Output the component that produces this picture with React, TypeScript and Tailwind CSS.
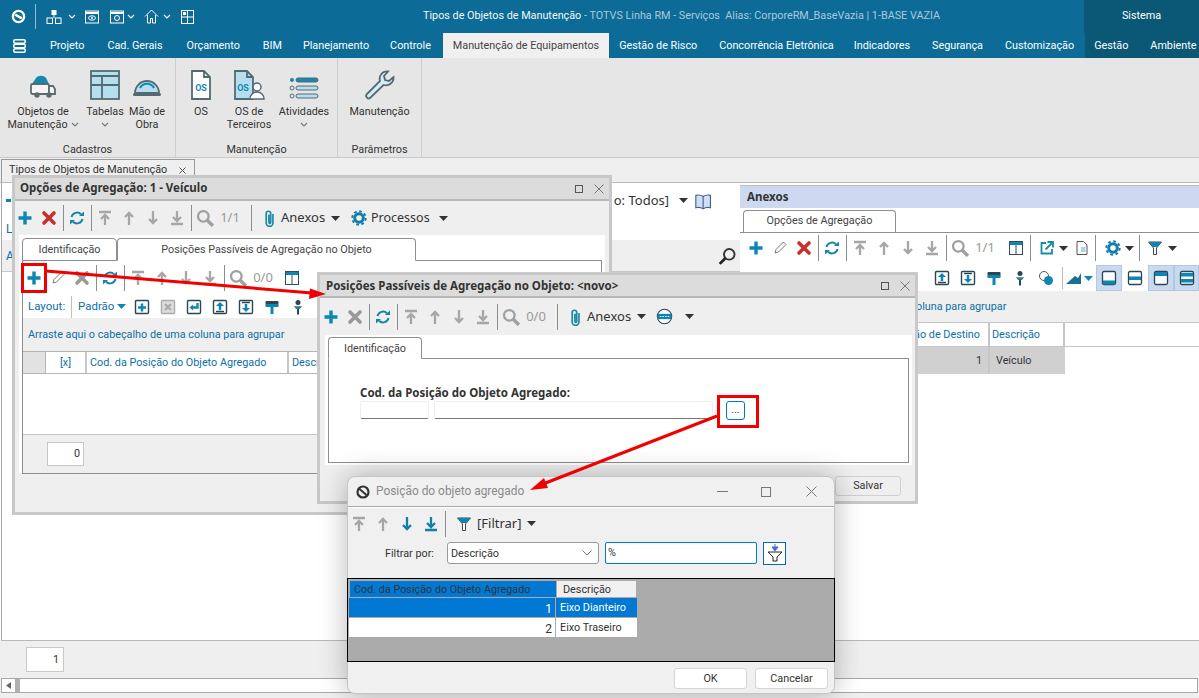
import React from 'react';

const Ic = ({ s = 16, v = 16, children }: { s?: number; v?: number; children: React.ReactNode }) => (
  <svg width={s} height={s} viewBox={`0 0 ${v} ${v}`} fill="none" className="shrink-0">{children}</svg>
);
const TEAL = '#0e86b4';
const GRAY = '#a6a6a6';
const Plus = ({ c = TEAL }: { c?: string }) => <Ic><path d="M6.300 1.500h3.400v4.800h4.800v3.400H9.700v4.800H6.300V9.700H1.500V6.300h4.800z" fill={c} /></Ic>;
const XMark = ({ c = '#c9302c' }: { c?: string }) => <Ic><path d="M3 3l10 10M13 3L3 13" stroke={c} strokeWidth="3.600" strokeLinecap="round" /></Ic>;
const Pencil = () => <Ic><path d="M3 13l1-3.500L11.500 2 14 4.500 6.500 12z" stroke="#777" fill="#fff" /></Ic>;
const Refresh = ({ c = '#1585a5' }: { c?: string }) => (
  <Ic><path d="M2.500 7A5.700 5.700 0 0 1 12 4.200" stroke={c} strokeWidth="2" /><path d="M13.500 9A5.700 5.700 0 0 1 4 11.800" stroke={c} strokeWidth="2" /><path d="M10 6h5V1.500z" fill={c} /><path d="M6 10H1v4.500z" fill={c} /></Ic>
);
const NavTop = ({ c = GRAY }: { c?: string }) => <Ic><path d="M2 2h12M8 5v10M4 9l4-4 4 4" stroke={c} strokeWidth="2.300" /></Ic>;
const NavUp = ({ c = GRAY }: { c?: string }) => <Ic><path d="M8 3v12M4 7l4-4 4 4" stroke={c} strokeWidth="2.300" /></Ic>;
const NavDown = ({ c = GRAY }: { c?: string }) => <Ic><path d="M8 13V1M4 9l4 4 4-4" stroke={c} strokeWidth="2.300" /></Ic>;
const NavBottom = ({ c = GRAY }: { c?: string }) => <Ic><path d="M2 14h12M8 1v10M4 7l4 4 4-4" stroke={c} strokeWidth="2.300" /></Ic>;
const Zoom = () => <Ic s={18}><circle cx="6.500" cy="6.500" r="4.700" stroke="#a0a0a0" strokeWidth="2" /><path d="M10 10l5 5" stroke="#a0a0a0" strokeWidth="3" /></Ic>;
const Clip = () => <Ic s={18}><path d="M11.500 4.500v8a3 3 0 0 1-6 0V4a2 2 0 0 1 4 0v8a.8.8 0 0 1-1.600 0V5" stroke="#1b8aa8" strokeWidth="1.500" /></Ic>;
const Gear = () => (
  <Ic><circle cx="8" cy="8" r="4.300" stroke="#0e7fab" strokeWidth="3" /><circle cx="8" cy="8" r="6.700" stroke="#0e7fab" strokeWidth="2" strokeDasharray="2.700 2.560" /></Ic>
);
const Caret = ({ c = '#333' }: { c?: string }) => <svg width="9" height="5" viewBox="0 0 9 5" className="shrink-0"><path d="M0 0h9L4.500 5z" fill={c} /></svg>;
const Chev = ({ c = '#777' }: { c?: string }) => <svg width="8" height="5" viewBox="0 0 8 5" fill="none" className="shrink-0"><path d="M1 1l3 3 3-3" stroke={c} strokeWidth="1.100" /></svg>;
const GridIc = () => <Ic><rect x="1.500" y="1.500" width="13" height="13" stroke="#33505c" /><rect x="2" y="2" width="12" height="3" fill={TEAL} /><path d="M8 5v9" stroke="#33505c" /></Ic>;
const Funnel = () => <Ic><path d="M1.500 2h13L9.500 8v6.500h-3V8z" fill="#fff" stroke="#444" /><path d="M1.500 2h13L10 7H6z" fill={TEAL} /></Ic>;
const ExportIc = () => <Ic><path d="M7 3H2.500v10.500H13V9" stroke="#1b8aa8" strokeWidth="1.800" /><path d="M6.500 9.500L13 3M8.500 2H14v5.500" stroke="#1b8aa8" strokeWidth="1.800" /></Ic>;
const DocIc = () => <Ic><path d="M3 1.500h6.500L13 5v9.500H3z" fill="#fff" stroke="#555" /><rect x="7" y="7" width="4.500" height="5" fill="#a9d6e5" /></Ic>;
const Book = () => <Ic s={18}><path d="M9 4C7 2.500 4.500 2.500 2.500 3v11c2-.5 4.500-.5 6.500 1 2-1.500 4.500-1.500 6.500-1V3C13.500 2.500 11 2.500 9 4z" fill="#cfe0f5" stroke="#46608e" /><path d="M9 4v11" stroke="#46608e" /></Ic>;
const NoEntry = () => <Ic s={17}><circle cx="8" cy="8" r="6.800" fill="#fff" stroke="#345" /><rect x="1.500" y="5.500" width="13" height="5" fill={TEAL} /><path d="M3.500 8h9" stroke="#fff" strokeDasharray="1.500 1" /></Ic>;
const Magn = () => <Ic s={18}><circle cx="10" cy="6.500" r="4.700" stroke="#333" strokeWidth="1.700" /><path d="M6.500 10l-5 5" stroke="#222" strokeWidth="2.500" /></Ic>;

/* second-row boxed icons */
const Box = ({ children, gray }: { children: React.ReactNode; gray?: boolean }) => (
  <Ic><rect x="1.500" y="1.500" width="13" height="13" rx="1" fill={gray ? '#ddd' : '#fff'} stroke={gray ? '#aaa' : '#2c4653'} strokeWidth="1.400" />{children}</Ic>
);
const BoxPlus = () => <Box><path d="M8 4.500v8M4 8.500h8" stroke={TEAL} strokeWidth="2.500" /></Box>;
const BoxX = () => <Box gray><path d="M5 5l6 6M11 5l-6 6" stroke="#aaa" strokeWidth="2.300" /></Box>;
const BoxEnter = () => <Box><path d="M11.500 4v4.500H5.500" stroke={TEAL} strokeWidth="2.300" /><path d="M7 5.500L3.500 8.500 7 11.500z" fill={TEAL} /></Box>;
const BoxUp = () => <Box><path d="M4 12.500h8" stroke="#2c4653" strokeWidth="1.500" /><path d="M8 11V6" stroke={TEAL} strokeWidth="2.500" /><path d="M4 7l4-4 4 4z" fill={TEAL} /></Box>;
const BoxDown = () => <Box><path d="M4 3.500h8" stroke="#2c4653" strokeWidth="1.500" /><path d="M8 5v5" stroke={TEAL} strokeWidth="2.500" /><path d="M4 9l4 4 4-4z" fill={TEAL} /></Box>;
const Roller = () => <Ic><rect x="1.500" y="2" width="13" height="6" rx="1" fill="#2c4653" /><rect x="2" y="5" width="12" height="3" fill={TEAL} /><rect x="6.500" y="8" width="3" height="7" fill={TEAL} /></Ic>;
const PinIc = () => <Ic><circle cx="8" cy="3.500" r="2.500" fill="#2c4653" /><path d="M4 7h8l-2 3H6z" fill={TEAL} /><path d="M8 10v5.500" stroke="#2c4653" strokeWidth="2" /><path d="M4.500 7.500h7" stroke="#888" /></Ic>;
const CircleCombo = () => <Ic><circle cx="6" cy="6" r="4.500" fill="#fff" stroke="#555" /><circle cx="10.500" cy="10.500" r="4.500" fill={TEAL} /></Ic>;
const AreaIc = () => <svg width="15" height="11" viewBox="0 0 15 11" className="shrink-0"><path d="M0 11L9 3l3 2 3-5v11z" fill="#1b6f93" /></svg>;
const Layout1 = ({ kind }: { kind: 'bottom' | 'middle' | 'top' | 'double' }) => (
  <Ic>
    <rect x="1.500" y="1.500" width="13" height="13" rx="1.500" fill="#fff" stroke="#2c4653" strokeWidth="1.300" />
    {kind === 'bottom' && <rect x="2" y="10.500" width="12" height="4" fill={TEAL} />}
    {kind === 'middle' && <rect x="2" y="6.500" width="12" height="3.500" fill={TEAL} />}
    {kind === 'top' && <rect x="2" y="2" width="12" height="4" fill={TEAL} />}
    {kind === 'double' && <><rect x="2" y="3" width="12" height="3.500" fill={TEAL} /><rect x="2" y="9" width="12" height="3.500" fill={TEAL} /></>}
  </Ic>
);

const S = ({ children, w = 'w-[24px]' }: { children?: React.ReactNode; w?: string }) => (
  <div className={`${w} flex justify-center items-center shrink-0`}>{children}</div>
);
const Sep = () => <div className="w-px h-[26px] bg-[#8c8c8c] ml-[2px] mr-px shrink-0" />;

const Nav = ({ label }: { label: string }) => (
  <>
    <Sep />
    <S><NavTop /></S><S><NavUp /></S><S><NavDown /></S><S><NavBottom /></S>
    <Sep />
    <S><Zoom /></S>
    <span className="w-[26px] text-[13px] text-[#9a9a9a] text-center shrink-0 font-['Noto_Sans',sans-serif]">{label}</span>
  </>
);

const WinBtns = () => (
  <div className="ml-auto flex items-center gap-[11px] pr-[5px]">
    <div className="w-[8px] h-[8px] border border-[#555]" />
    <svg width="10" height="10" viewBox="0 0 10 10" fill="none"><path d="M.5.5l9 9M9.500.5l-9 9" stroke="#777" /></svg>
  </div>
);

const Win = ({ title, cls, titleCls = '', children }: { title: string; cls: string; titleCls?: string; children: React.ReactNode }) => (
  <div className={`absolute flex flex-col border-[3px] border-[#c8c8c8] bg-[#efefef] ${cls}`}>
    <div className="h-[21px] bg-[#dcdcdc] border-b-2 border-[#b9b9b9] box-content flex items-center pl-[5px] shrink-0">
      <span className={`font-bold text-[11.5px] text-[#333] font-['Noto_Sans',sans-serif] ${titleCls}`}>{title}</span>
      <WinBtns />
    </div>
    {children}
  </div>
);

const Cell = ({ w, cls = '', children }: { w: string; cls?: string; children?: React.ReactNode }) => (
  <div className={`${w} h-full flex items-center border-r-2 border-[#c6c6c6] shrink-0 pt-[2px] ${cls}`}>{children}</div>
);

const RibbonItem = ({ w, icon, lines, chev, twoChev }: { w: string; icon: React.ReactNode; lines: string[]; chev?: boolean; twoChev?: boolean }) => (
  <div className={`${w} flex flex-col items-center shrink-0`}>
    <div className="h-[32px] flex items-end justify-center mt-[10px]">{icon}</div>
    <div className="mt-[5px] leading-[13px] text-center whitespace-nowrap">
      {lines.map((l, i) => (
        <div key={l} className="flex items-center justify-center gap-[3px]">{l}{twoChev && i === 1 && <Chev />}</div>
      ))}
      {chev && <div className="flex justify-center h-[13px] items-center"><Chev /></div>}
    </div>
  </div>
);

const RibbonGroup = ({ w, label, children }: { w: string; label: string; children: React.ReactNode }) => (
  <div className={`${w} h-full flex flex-col border-r border-[#cdcdcd] shrink-0`}>
    <div className="flex flex-1">{children}</div>
    <div className="text-center h-[16px] leading-[18px]">{label}</div>
  </div>
);

const TabHead = ({ w, h = 'h-[23px]', children, on }: { w: string; h?: string; children: React.ReactNode; on?: boolean }) => (
  <div className={`${w} ${h} border border-[#8e8e8e] rounded-t-[4px] flex items-center justify-center text-[#444] shrink-0 bg-white pt-[2px] ${on ? 'border-b-white' : ''}`}>{children}</div>
);

const MenuItem = ({ children, cls = '' }: { children: React.ReactNode; cls?: string }) => (
  <div className={`px-[11px] h-full flex items-center whitespace-nowrap pt-[1px] ${cls}`}>{children}</div>
);

export default function App() {
  return (
    <div className="relative w-[1199px] h-[698px] overflow-hidden bg-[#efefef] text-[10.8px] text-[#333] font-['Roboto',sans-serif]">
      {/* Title bar */}
      <div className="h-[33px] bg-[#0d6c97] flex items-center text-white">
        <div className="w-[35px] flex justify-center pl-[2px]">
          <svg width="15" height="15" viewBox="0 0 16 16" fill="none"><circle cx="8" cy="8" r="6" stroke="#fff" strokeWidth="2.500" /><path d="M4.500 6l7 4" stroke="#fff" strokeWidth="2.500" /></svg>
        </div>
        <div className="w-px h-[25px] bg-[#8fbdd2]" />
        <div className="flex items-center ml-[10px] w-[150px] shrink-0">
          <svg width="16" height="16" viewBox="0 0 16 16" fill="none"><rect x="5.500" y="1" width="5" height="5" fill="#fff" /><rect x="1" y="9" width="5.500" height="5.500" stroke="#fff" /><rect x="9.500" y="9" width="5.500" height="5.500" stroke="#fff" /><path d="M8 6v3" stroke="#fff" /></svg>
          <div className="ml-[6px]"><Chev c="#fff" /></div>
          <svg width="14" height="14" viewBox="0 0 14 14" fill="none" className="ml-[9px]"><rect x=".5" y="1" width="13" height="12" stroke="#fff" /><path d="M1 3h12" stroke="#fff" strokeWidth="2" /><ellipse cx="7" cy="8" rx="3.500" ry="2.200" stroke="#fff" /><circle cx="7" cy="8" r="1" fill="#fff" /></svg>
          <svg width="14" height="14" viewBox="0 0 14 14" fill="none" className="ml-[11px]"><rect x=".5" y="1" width="13" height="12" stroke="#fff" /><path d="M1 3h12" stroke="#fff" strokeWidth="2" /><circle cx="7" cy="8" r="2.500" stroke="#fff" /></svg>
          <div className="ml-[3px]"><Chev c="#fff" /></div>
          <svg width="15" height="15" viewBox="0 0 15 15" fill="none" className="ml-[9px]"><path d="M1 7.500L7.500 1 14 7.500M3.500 6v8h3V9.500h2V14h3V6" stroke="#fff" /></svg>
          <div className="ml-[4px]"><Chev c="#fff" /></div>
          <svg width="13" height="14" viewBox="0 0 13 14" fill="none" className="ml-[10px]"><rect x=".5" y=".5" width="12" height="13" stroke="#fff" /><path d="M6.500 1v12M1 7h11" stroke="#fff" /><rect x="2" y="2" width="3" height="3" fill="#fff" /></svg>
        </div>
        <div className="flex-1 pl-[227px] whitespace-pre">
          <span className="text-[#f2f6f8]">Tipos de Objetos de Manutenção</span><span className="text-[#a9c9da]"> - TOTVS Linha RM - Serviços  Alias: CorporeRM_BaseVazia | 1-BASE VAZIA</span>
        </div>
        <div className="w-[115px] h-full bg-[#0b5876] flex items-center justify-center shrink-0">Sistema</div>
      </div>

      {/* Menu */}
      <div className="h-[25px] bg-[#0d6c97] flex items-center text-white">
        <div className="w-[39px] flex justify-center shrink-0">
          <svg width="13" height="14" viewBox="0 0 13 14" fill="none"><rect x=".75" y=".75" width="11.500" height="3.500" rx="1.500" stroke="#fff" strokeWidth="1.500" /><rect x=".75" y="5.250" width="11.500" height="3.500" rx="1.500" stroke="#fff" strokeWidth="1.500" /><rect x=".75" y="9.750" width="11.500" height="3.500" rx="1.500" stroke="#fff" strokeWidth="1.500" /></svg>
        </div>
        <MenuItem>Projeto</MenuItem>
        <MenuItem cls="ml-px">Cad. Gerais</MenuItem>
        <MenuItem cls="ml-[2px]">Orçamento</MenuItem>
        <MenuItem cls="ml-px">BIM</MenuItem>
        <MenuItem cls="-ml-px">Planejamento</MenuItem>
        <MenuItem cls="-ml-px">Controle</MenuItem>
        <div className="ml-px h-full bg-[#f0f0f0] text-[#444] px-[10px] pt-[1px] flex items-center whitespace-nowrap">Manutenção de Equipamentos</div>
        <MenuItem cls="-ml-px">Gestão de Risco</MenuItem>
        <MenuItem>Concorrência Eletrônica</MenuItem>
        <MenuItem cls="-ml-[2px]">Indicadores</MenuItem>
        <MenuItem>Segurança</MenuItem>
        <MenuItem>Customização</MenuItem>
        <div className="ml-auto h-full w-[115px] bg-[#0b5876] flex items-center pl-[9px] pt-[1px] gap-[22px] shrink-0 whitespace-nowrap"><span>Gestão</span><span>Ambiente</span></div>
      </div>

      {/* Ribbon */}
      <div className="h-[100px] bg-[#e6e6e6] border-b border-[#c8c8c8] flex">
        <RibbonGroup w="w-[176px]" label="Cadastros">
          <RibbonItem w="w-[86px]" lines={['Objetos de', 'Manutenção']} twoChev icon={
            <svg width="28" height="26" viewBox="0 0 28 26" fill="none"><path d="M3 10l4-6c2-3 8-3 10 0l3 6z" fill="#118ab2" /><rect x="2" y="10" width="18" height="10" rx="1.500" fill="#f5f5f5" stroke="#5d6b70" strokeWidth="1.800" /><path d="M20 12h4l2 3v5h-6z" fill="#f5f5f5" stroke="#5d6b70" strokeWidth="1.800" /><circle cx="8" cy="21" r="2.700" fill="#5d6b70" /><circle cx="20" cy="21" r="2.700" fill="#5d6b70" /></svg>
          } />
          <RibbonItem w="w-[38px]" lines={['Tabelas']} chev icon={
            <svg width="30" height="30" viewBox="0 0 30 30" fill="none"><rect x="1" y="1" width="28" height="28" fill="#b5dfee" stroke="#546a73" strokeWidth="1.800" /><path d="M1 6h28M12 6v23M1 15h28" stroke="#546a73" strokeWidth="1.800" /></svg>
          } />
          <RibbonItem w="w-[46px]" lines={['Mão de', 'Obra']} icon={
            <svg width="30" height="26" viewBox="0 0 30 26" fill="none"><path d="M3 19a12 12 0 0 1 24 0z" fill="#b5dfee" stroke="#546a73" strokeWidth="1.800" /><path d="M8 14a8 8 0 0 1 14 0" stroke="#118ab2" strokeWidth="2" /><rect x="1" y="19" width="28" height="3" rx="1.500" fill="#546a73" /></svg>
          } />
        </RibbonGroup>
        <RibbonGroup w="w-[162px]" label="Manutenção">
          <RibbonItem w="w-[50px]" lines={['OS']} icon={
            <svg width="22" height="30" viewBox="0 0 22 30" fill="none"><path d="M2 1h12l6 6v22H2z" fill="#fff" stroke="#546a73" strokeWidth="1.800" /><path d="M14 1v6h6" stroke="#546a73" strokeWidth="1.800" /><text x="11" y="21" fontSize="9" fill="#118ab2" textAnchor="middle" fontWeight="bold">OS</text></svg>
          } />
          <RibbonItem w="w-[46px]" lines={['OS de', 'Terceiros']} icon={
            <svg width="32" height="30" viewBox="0 0 32 30" fill="none"><path d="M2 1h12l6 6v22H2z" fill="#b5dfee" stroke="#546a73" strokeWidth="1.800" /><path d="M14 1v6h6" stroke="#546a73" strokeWidth="1.800" /><text x="10" y="21" fontSize="9" fill="#118ab2" textAnchor="middle" fontWeight="bold">OS</text><circle cx="24" cy="17" r="4" fill="#fff" stroke="#546a73" strokeWidth="1.500" /><path d="M17 29a7 7 0 0 1 14 0z" fill="#fff" stroke="#546a73" strokeWidth="1.500" /></svg>
          } />
          <RibbonItem w="w-[64px]" lines={['Atividades']} chev icon={
            <svg width="30" height="26" viewBox="0 0 30 26" fill="none"><circle cx="3" cy="6" r="2" fill="#118ab2" /><circle cx="3" cy="14" r="2" fill="none" stroke="#546a73" /><circle cx="3" cy="22" r="2" fill="none" stroke="#546a73" /><rect x="7" y="4" width="22" height="4" rx="2" fill="#118ab2" stroke="#546a73" /><rect x="7" y="12" width="22" height="4" rx="2" fill="#b5dfee" stroke="#546a73" /><rect x="7" y="20" width="22" height="4" rx="2" fill="#b5dfee" stroke="#546a73" /></svg>
          } />
        </RibbonGroup>
        <RibbonGroup w="w-[84px]" label="Parâmetros">
          <RibbonItem w="w-[83px]" lines={['Manutenção']} icon={
            <svg width="32" height="32" viewBox="0 0 32 32" fill="none"><path d="M2.500 26.500L16 13c-1.500-5 2-10 8-9.500l-4 4.500 1 4 4 1 4.500-4c.5 6-5 9.500-10 8L6 30c-2 1.500-5-1.500-3.500-3.500z" fill="#d6edf5" stroke="#546a73" strokeWidth="1.800" /></svg>
          } />
        </RibbonGroup>
      </div>

      {/* Document tab strip */}
      <div className="h-[25px] bg-[#efefef] border-b border-[#b9b9b9] flex items-end pl-px">
        <div className="w-[194px] h-[23px] border border-b-0 border-[#9a9a9a] bg-[#efefef] flex items-start pt-[2px] pl-[7px] text-[#333] whitespace-nowrap">
          Tipos de Objetos de Manutenção
          <svg width="7" height="7" viewBox="0 0 7 7" fill="none" className="ml-auto mr-[8px] mt-[5px]"><path d="M.5.5l6 6M6.500.5l-6 6" stroke="#555" /></svg>
        </div>
      </div>

      {/* Main area */}
      <div className="h-[457px] bg-white flex">
        <div className="w-[739px] ml-px border-l border-[#a8a8a8] flex flex-col shrink-0">
          <div className="h-[57px] flex justify-between">
            <div className="pl-[4px] text-[#0b6fa8]">
              <div className="w-[5px] h-[3px] bg-[#0e86b4] mt-[16px]" />
              <div className="mt-[18px] text-[12px]">L</div>
            </div>
            <div className="flex items-center h-[35px] pr-[29px] text-[13px] whitespace-nowrap font-['Noto_Sans',sans-serif]">
              <span>o: Todos]</span>
              <span className="ml-[10px] mr-[5px]"><Caret /></span>
              <Book />
            </div>
          </div>
          <div className="h-[32px] bg-[#efefef] flex items-center justify-between pl-[4px] pr-[3px] text-[#0b6fa8] text-[12px] border-b border-[#c6c6c6]">
            <span>A</span>
            <div className="mr-[1px]"><Magn /></div>
          </div>
        </div>

        <div className="flex-1 min-w-0 pt-[2px]">
          <div className="h-[23px] bg-[#cdd9f1] border-t border-[#bcbcbc] pl-[7px] flex items-center font-bold text-[#333] text-[11.5px] font-['Noto_Sans',sans-serif]">Anexos</div>
          <div className="h-[25px] flex items-end pl-[3px] border-b border-[#8e8e8e]">
            <div className="w-[153px] h-[22px] border border-b-0 border-[#8e8e8e] rounded-t-[4px] flex items-center justify-center text-[#444]">Opções de Agregação</div>
          </div>
          <div className="h-[32px] flex items-center pl-[4px] pb-[2px] overflow-hidden">
            <S><Plus /></S><S><Pencil /></S><S><XMark /></S>
            <Sep /><S><Refresh /></S>
            <Nav label="1/1" />
            <div className="ml-[6px]"><S><GridIc /></S></div>
            <Sep />
            <div className="ml-[3px]"><S><ExportIc /></S></div>
            <Caret />
            <div className="ml-[3px]"><S w="w-[22px]"><DocIc /></S></div>
            <Sep />
            <div className="ml-[4px]"><S><Gear /></S></div>
            <Caret />
            <div className="w-[3px]" />
            <Sep />
            <S w="w-[27px]"><Funnel /></S>
            <Caret />
          </div>
          <div className="h-[26px] flex items-center justify-end">
            <S w="w-[26px]"><BoxUp /></S><S w="w-[26px]"><BoxDown /></S><S w="w-[26px]"><Roller /></S><S w="w-[26px]"><PinIc /></S><S w="w-[26px]"><CircleCombo /></S>
            <div className="w-px h-[22px] bg-[#bbb] mx-[3px]" />
            <div className="w-[30px] flex items-center gap-[3px]"><AreaIc /><Caret c={TEAL} /></div>
            <div className="w-[26px] h-[26px] bg-[#c9d9f0] border border-[#b3c6e2] flex items-center justify-center"><Layout1 kind="bottom" /></div>
            <div className="w-[26px] h-[26px] flex items-center justify-center"><Layout1 kind="middle" /></div>
            <div className="w-[26px] h-[26px] bg-[#c9d9f0] border border-[#b3c6e2] flex items-center justify-center"><Layout1 kind="top" /></div>
            <div className="w-[25px] h-[26px] bg-[#c9d9f0] border border-[#b3c6e2] flex items-center justify-center"><Layout1 kind="double" /></div>
          </div>
          <div className="h-[32px] bg-[#efefef] border-b border-[#c6c6c6] flex items-center pl-[10px] pt-[2px] text-[#0b6fa8] whitespace-nowrap">Arraste aqui o cabeçalho de uma coluna para agrupar</div>
          <div className="h-[24px] flex text-[#0b6fa8] border-b border-[#c6c6c6]">
            <Cell w="w-[250px]" cls="justify-end pr-[8px]">Posição de Destino</Cell>
            <Cell w="w-[75px]" cls="pl-[2px]">Descrição</Cell>
          </div>
          <div className="h-[27px] flex pt-0">
            <div className="w-[250px] bg-[#d0d0d0] flex items-center justify-end pr-[6px] pt-[2px] border-r-2 border-[#c6c6c6]">1</div>
            <div className="w-[75px] bg-[#d0d0d0] flex items-center pl-[6px] pt-[2px]">Veículo</div>
          </div>
        </div>
      </div>

      {/* Footer */}
      <div className="h-[38px] border-t border-[#b9b9b9] ml-px flex items-center pl-[25px]">
        <div className="w-[38px] h-[25px] bg-white border border-[#c8c8c8] flex items-center justify-end pr-[4px] pt-[1px]">1</div>
      </div>
      <div className="h-[15px] bg-white border border-[#a8a8a8] mx-px flex items-center">
        <div className="w-[15px] h-full flex items-center justify-center border-r-2 border-[#b0b0b0]">
          <svg width="5" height="7" viewBox="0 0 5 7"><path d="M5 0v7L0 3.500z" fill="#666" /></svg>
        </div>
        <div className="w-[3px] h-full bg-[#b0b0b0]" />
      </div>

      {/* Window 1 */}
      <Win title="Opções de Agregação: 1 - Veículo" titleCls="pb-[2px]" cls="left-[12px] top-[175px] w-[600px] h-[340px]">
        <div className="h-[34px] flex items-center shrink-0 text-[13px] whitespace-nowrap -ml-[2px] font-['Noto_Sans',sans-serif]">
          <S><Plus /></S><S><XMark /></S>
          <Sep /><S><Refresh /></S>
          <Nav label="1/1" />
          <div className="w-[6px]" /><Sep />
          <div className="w-[7px]" /><Clip />
          <span className="ml-[3px] w-[50px]">Anexos</span><Caret />
          <div className="w-[11px]" /><Gear />
          <span className="ml-[4px] w-[68px] text-[12.5px]">Processos</span><Caret />
        </div>
        <div className="mx-[4px] bg-white pt-[3px] px-[3px] h-[238px] flex-none">
          <div className="flex relative z-10 -mb-px">
            <TabHead w="w-[95px]">Identificação</TabHead>
            <TabHead w="w-[299px]" on>Posições Passíveis de Agregação no Objeto</TabHead>
          </div>
          <div className="border border-[#8e8e8e] h-[214px] bg-white flex flex-col">
            <div className="h-[34px] flex items-center overflow-hidden shrink-0 -ml-px">
              <S><Plus /></S><S><Pencil /></S><S><XMark c="#999" /></S>
              <Sep /><S><Refresh /></S>
              <Nav label="0/0" />
              <S w="w-[32px]"><GridIc /></S>
            </div>
            <div className="h-[23px] flex items-center shrink-0 text-[#0b6fa8] pl-[5px] text-[11.5px]">
              <span className="w-[38px]">Layout:</span>
              <div className="w-px h-[22px] bg-[#c0c0c0] ml-[5px] mr-[6px]" />
              <span className="w-[39px]">Padrão</span>
              <Caret c={TEAL} />
              <div className="w-[3px]" />
              <S w="w-[26px]"><BoxPlus /></S><S w="w-[26px]"><BoxX /></S><S w="w-[26px]"><BoxEnter /></S><S w="w-[26px]"><BoxUp /></S><S w="w-[26px]"><BoxDown /></S><S w="w-[26px]"><Roller /></S><S w="w-[26px]"><PinIc /></S>
            </div>
            <div className="h-[33px] bg-[#efefef] flex items-center pl-[5px] pt-[2px] text-[#0b6fa8] shrink-0 whitespace-nowrap">Arraste aqui o cabeçalho de uma coluna para agrupar</div>
            <div className="h-[23px] flex text-[#0b6fa8] border-y border-[#b4b4b4] shrink-0 whitespace-nowrap">
              <div className="w-[23px] bg-[#e2e2e2] border-r border-[#b4b4b4]" />
              <Cell w="w-[41px]" cls="justify-center">[x]</Cell>
              <Cell w="w-[202px]" cls="pl-[3px]">Cod. da Posição do Objeto Agregado</Cell>
              <div className="pl-[3px] pt-[2px] flex items-center">Descrição</div>
            </div>
            <div className="flex-1" />
            <div className="h-[39px] bg-[#efefef] border-t border-[#c6c6c6] flex items-center pl-[24px] shrink-0">
              <div className="w-[37px] h-[24px] bg-white border border-[#c8c8c8] flex items-center justify-end pr-[3px] pt-[1px]">0</div>
            </div>
          </div>
        </div>
      </Win>

      {/* Window 2 */}
      <Win title="Posições Passíveis de Agregação no Objeto: <novo>" titleCls="pl-px pt-[1px]" cls="left-[317px] top-[272px] w-[601px] h-[232px] z-10">
        <div className="h-[37px] flex items-center shrink-0 text-[13px] whitespace-nowrap -ml-px font-['Noto_Sans',sans-serif]">
          <S><Plus /></S><S><XMark c="#999" /></S>
          <Sep /><S><Refresh /></S>
          <Nav label="0/0" />
          <div className="w-[6px]" /><Sep />
          <div className="w-[7px]" /><Clip />
          <span className="ml-[3px] w-[50px]">Anexos</span><Caret />
          <div className="w-[10px]" /><NoEntry />
          <div className="w-[12px]" /><Caret />
        </div>
        <div className="ml-[5px] mr-[3px] bg-white h-[130px] pt-[2px] pl-[3px] pr-[3px]">
          <div className="relative z-10 -mb-px flex"><TabHead w="w-[94px]" h="h-[22px]" on>Identificação</TabHead></div>
          <div className="border border-[#8e8e8e] h-[105px] pl-[31px] pt-[26px]">
            <div className="font-bold leading-[16px] text-[#333] text-[11.5px] font-['Noto_Sans',sans-serif]">Cod. da Posição do Objeto Agregado:</div>
            <div className="flex gap-[5px]">
              <div className="w-[69px] h-[18px] bg-white border border-[#eee] border-b-[#777] rounded-[2px]" />
              <div className="w-[279px] h-[18px] bg-white border border-[#eee] border-b-[#777] rounded-[2px]" />
              <div className="ml-[8px] w-[19px] h-[19px] border border-[#0078d4] rounded-[3px] flex items-center justify-center text-[10px] bg-white pb-[3px]">...</div>
            </div>
          </div>
        </div>
        <div className="flex justify-end pr-[14px] pt-[11px]">
          <div className="w-[66px] h-[20px] bg-[#efefef] border border-[#d0d0d0] rounded-[3px] flex items-center justify-center pt-[1px]">Salvar</div>
        </div>
      </Win>

      {/* Window 3 */}
      <div className="absolute left-[347px] top-[476px] w-[488px] h-[218px] z-20 rounded-[8px] bg-[#f0f0f0] border border-[#c5c5c5] shadow-[0_0_28px_rgba(0,0,0,0.28)] flex flex-col">
        <div className="h-[30px] border-b border-[#a9a9a9] flex items-center shrink-0 text-[11.9px] text-[#8a8a8a]">
          <div className="ml-[8px] mr-[6px]">
            <svg width="14" height="14" viewBox="0 0 14 14" fill="none"><circle cx="7" cy="7" r="5.500" stroke="#333" strokeWidth="2.200" /><path d="M3.500 4l7 6" stroke="#333" strokeWidth="2" /></svg>
          </div>
          <span>Posição do objeto agregado</span>
          <div className="ml-auto flex items-center pr-[17px]">
            <div className="w-[11px] h-px bg-[#777]" />
            <div className="w-[10px] h-[10px] border border-[#777] ml-[33px]" />
            <svg width="11" height="11" viewBox="0 0 11 11" fill="none" className="ml-[35px]"><path d="M.5.5l10 10M10.500.5l-10 10" stroke="#777" /></svg>
          </div>
        </div>
        <div className="h-[32px] flex items-center shrink-0 border-t border-white text-[13px] font-['Noto_Sans',sans-serif]">
          <div className="-ml-[1px] flex items-center">
            <S><NavTop /></S><S><NavUp /></S><S><NavDown c="#147ea6" /></S><S><NavBottom c="#147ea6" /></S>
            <Sep />
          </div>
          <div className="ml-[9px]"><Funnel /></div>
          <span className="ml-[5px] w-[50px]">[Filtrar]</span>
          <Caret />
        </div>
        <div className="flex items-center h-[24px] shrink-0 mt-[2px]">
          <span className="w-[99px] pl-[37px] pt-[2px] text-[#333] whitespace-nowrap">Filtrar por:</span>
          <div className="w-[152px] h-[22px] bg-white border border-[#9a9a9a] rounded-[3px] flex items-center justify-between pl-[3px] pr-[6px]">
            <span className="pt-[2px]">Descrição</span>
            <svg width="10" height="6" viewBox="0 0 10 6" fill="none"><path d="M.5.5L5 5 9.500.5" stroke="#777" /></svg>
          </div>
          <div className="ml-[6px] w-[152px] h-[22px] bg-white border border-[#0078d4] rounded-[2px] flex items-center pl-[2px]">%</div>
          <div className="ml-[6px] w-[23px] h-[23px] bg-white border border-[#0d6c97] flex items-center justify-center">
            <svg width="16" height="18" viewBox="0 0 16 18" fill="none"><path d="M8 0v4M5 3l3 4 3-4z" fill="#3d6fd8" stroke="#3d6fd8" /><path d="M1 8h14l-5 5v4H6v-4z" fill="#fff" stroke="#222" /></svg>
          </div>
        </div>
        <div className="mt-[13px] -mx-px h-[84px] border border-black bg-[#ababab] shrink-0 pt-[2px] pl-[1px] whitespace-nowrap">
          <div className="flex h-[16px]">
            <div className="ml-[1px] w-[206px] bg-[#0078d4] flex items-center pl-[4px] pt-[2px] text-[#333]">Cod. da Posição do Objeto Agregado</div>
            <div className="ml-px w-[79px] bg-[#f0f0f0] flex items-center pl-[6px] pt-[2px]">Descrição</div>
          </div>
          <div className="flex h-[19px] mt-px bg-[#0078d4] text-white w-[288px]">
            <div className="w-[207px] flex items-center justify-end pr-[3px] pt-[3px] text-[12px] border-r border-[#ababab]">1</div>
            <div className="flex items-center pl-[4px] pt-[2px]">Eixo Dianteiro</div>
          </div>
          <div className="flex h-[19px] mt-px bg-white w-[288px]">
            <div className="w-[207px] flex items-center justify-end pr-[3px] pt-[3px] text-[12px] border-r border-[#ababab]">2</div>
            <div className="flex items-center pl-[4px] pt-[2px]">Eixo Traseiro</div>
          </div>
        </div>
        <div className="flex justify-end gap-[8px] pr-[6px] pt-[6px]">
          <div className="w-[73px] h-[21px] bg-white border border-[#d5d5d5] rounded-[3px] flex items-center justify-center pt-[1px]">OK</div>
          <div className="w-[73px] h-[21px] bg-white border border-[#d5d5d5] rounded-[3px] flex items-center justify-center pt-[1px]">Cancelar</div>
        </div>
      </div>

      {/* Red annotations */}
      <div className="absolute left-[21px] top-[263px] w-[26px] h-[30px] border-[3px] border-[#f00000] z-30" />
      <div className="absolute left-[717px] top-[395px] w-[42px] h-[33px] border-[3px] border-[#f00000] z-30" />
      <svg className="absolute left-0 top-0 z-30 pointer-events-none" width="1199" height="698" viewBox="0 0 1199 698" fill="none">
        <path d="M46 271L312 293" stroke="#f00000" strokeWidth="3" />
        <path d="M326 294L310 288.500 309 299z" fill="#f00000" />
        <path d="M717 416L543 484" stroke="#f00000" strokeWidth="3" />
        <path d="M530 490L544 478 548 488z" fill="#f00000" />
      </svg>
    </div>
  );
}
